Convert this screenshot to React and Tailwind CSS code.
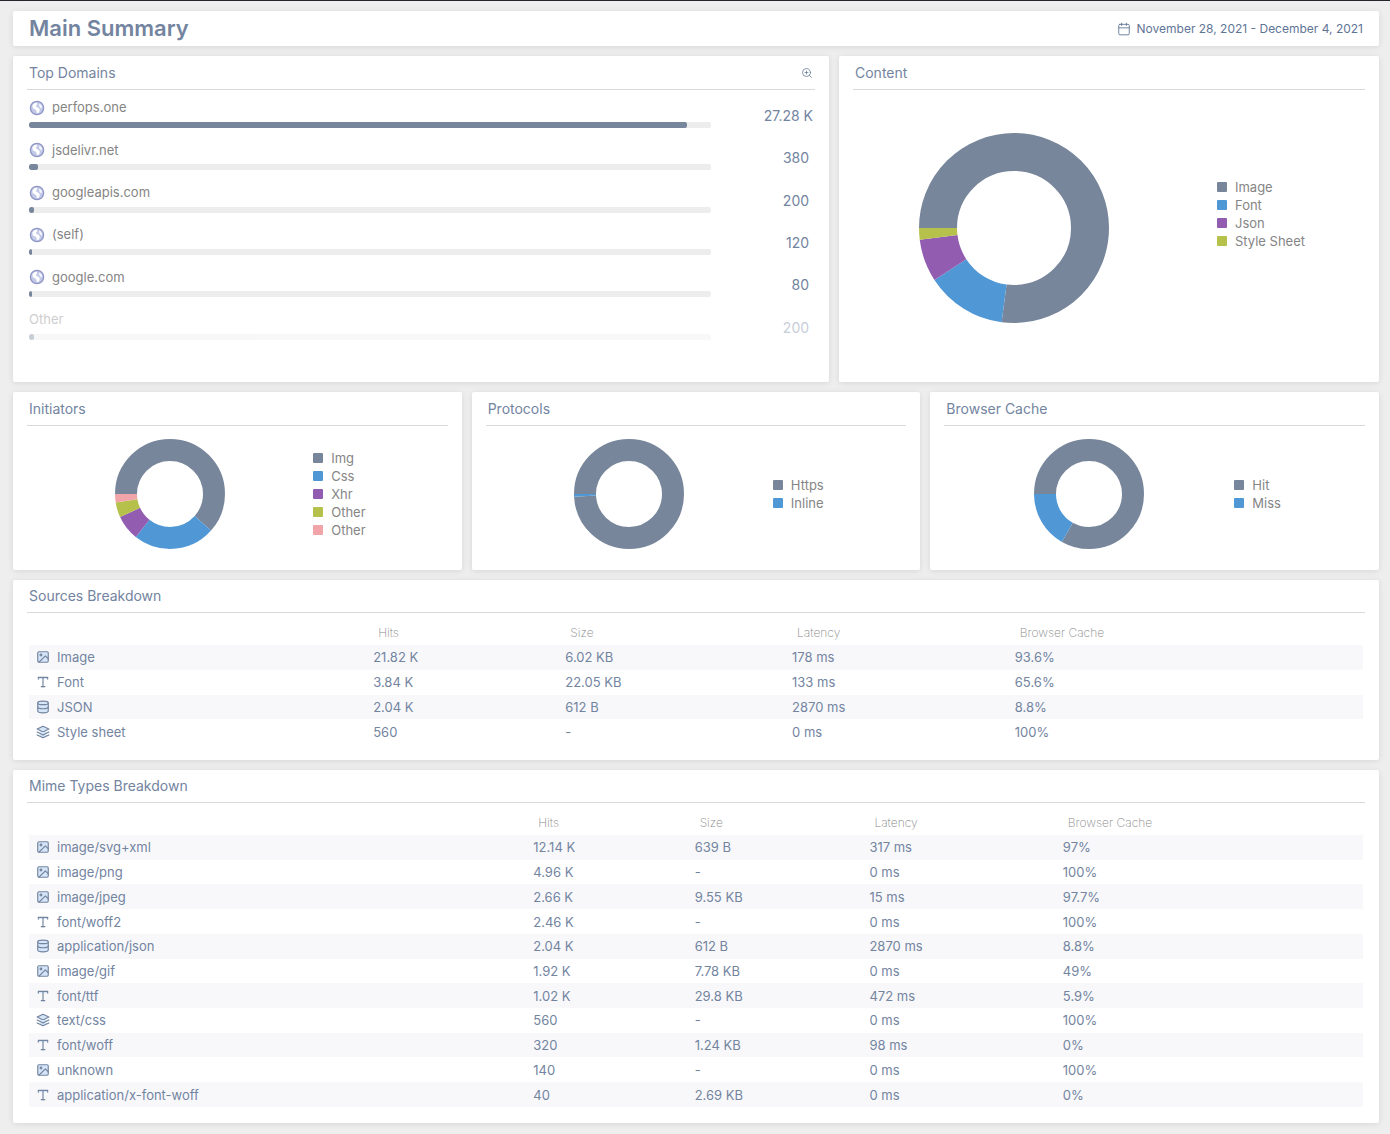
import { FiCalendar, FiZoomIn, FiImage, FiType, FiLayers } from "react-icons/fi";

const COLORS = ["#77869b", "#5097d6", "#925cb1", "#b5c14a", "#f1a5a8"];

const domains = [
  { name: "perfops.one", value: "27.28", unit: "K", percent: 96.5 },
  { name: "jsdelivr.net", value: "380", unit: "", percent: 1.3 },
  { name: "googleapis.com", value: "200", unit: "", percent: 0.7 },
  { name: "(self)", value: "120", unit: "", percent: 0.4 },
  { name: "google.com", value: "80", unit: "", percent: 0.4 },
  { name: "Other", value: "200", unit: "", percent: 0.7, other: true },
];

const content = [
  { label: "Image", value: 77.1 },
  { label: "Font", value: 13.7 },
  { label: "Json", value: 7.2 },
  { label: "Style Sheet", value: 2 },
];

const initiators = [
  { label: "Img", value: 61.6 },
  { label: "Css", value: 24.1 },
  { label: "Xhr", value: 7.4 },
  { label: "Other", value: 4.4 },
  { label: "Other", value: 2.5 },
];

const protocols = [
  { label: "Https", value: 99.2 },
  { label: "Inline", value: 0.8 },
];

const browserCache = [
  { label: "Hit", value: 83.2 },
  { label: "Miss", value: 16.8 },
];

const sources = [
  { type: "image", cells: ["Image", "21.82 K", "6.02 KB", "178 ms", "93.6%"] },
  { type: "font", cells: ["Font", "3.84 K", "22.05 KB", "133 ms", "65.6%"] },
  { type: "json", cells: ["JSON", "2.04 K", "612 B", "2870 ms", "8.8%"] },
  { type: "css", cells: ["Style sheet", "560", "-", "0 ms", "100%"] },
];

const mimeTypes = [
  { type: "image", cells: ["image/svg+xml", "12.14 K", "639 B", "317 ms", "97%"] },
  { type: "image", cells: ["image/png", "4.96 K", "-", "0 ms", "100%"] },
  { type: "image", cells: ["image/jpeg", "2.66 K", "9.55 KB", "15 ms", "97.7%"] },
  { type: "font", cells: ["font/woff2", "2.46 K", "-", "0 ms", "100%"] },
  { type: "json", cells: ["application/json", "2.04 K", "612 B", "2870 ms", "8.8%"] },
  { type: "image", cells: ["image/gif", "1.92 K", "7.78 KB", "0 ms", "49%"] },
  { type: "font", cells: ["font/ttf", "1.02 K", "29.8 KB", "472 ms", "5.9%"] },
  { type: "css", cells: ["text/css", "560", "-", "0 ms", "100%"] },
  { type: "font", cells: ["font/woff", "320", "1.24 KB", "98 ms", "0%"] },
  { type: "image", cells: ["unknown", "140", "-", "0 ms", "100%"] },
  { type: "font", cells: ["application/x-font-woff", "40", "2.69 KB", "0 ms", "0%"] },
];

// The body is painted first so that its fill doesn't hide the rings
const Database = ({ className }) => (
  <svg
    viewBox="0 0 24 24"
    className={className}
    stroke="currentColor"
    strokeWidth="2"
    strokeLinecap="round"
    strokeLinejoin="round"
    aria-hidden="true"
  >
    <path d="M3 5v14c0 1.66 4 3 9 3s9-1.34 9-3V5" />
    <ellipse cx="12" cy="5" rx="9" ry="3" />
    <path d="M21 12c0 1.66-4 3-9 3s-9-1.34-9-3" fill="none" />
  </svg>
);

const typeIcons = {
  image: FiImage,
  font: FiType,
  json: Database,
  css: FiLayers,
};

const Globe = () => (
  <svg viewBox="0 0 16 16" className="size-4 shrink-0" aria-hidden="true">
    <circle cx="8" cy="8" r="6.6" fill="#c3cae8" stroke="#8f96c6" strokeWidth="1.3" />
    <path d="M3.4 5.2 5.6 3l2.2-.3.5 1.5-1.3 1.2.5 1.6 1.9.8 1.4 1.6-.4 2-1.3 1.9-1.4-.8-.4-2.2-1.9-1.4-1.6-.6z" fill="#fff" />
    <path d="M10 3.4 12 4.6l1.2 2.2-.6 1.6-1.6-.8-.8-1.6z" fill="#f3f5fc" />
  </svg>
);

const Card = ({ title, action, titleHeight = "h-[34px]", className = "", children }) => (
  <section className={`rounded-xs bg-white px-[14px] shadow-[0_1px_6px_rgba(0,0,0,0.1)] ${className}`}>
    <div className={`flex items-center justify-between border-b border-[#d8dadd] px-[2px] ${titleHeight}`}>
      <h2 className="text-sm text-[#73849f]">{title}</h2>
      {action}
    </div>
    {children}
  </section>
);

const Donut = ({ data, label, className }) => {
  let start = 0;
  return (
    <svg viewBox="0 0 100 100" className={className} role="img" aria-label={label}>
      {data.map((item, index) => {
        const offset = start;
        start += item.value;
        return (
          <circle
            key={index}
            cx="50"
            cy="50"
            r="40"
            fill="none"
            stroke={COLORS[index]}
            strokeWidth="20"
            pathLength="100"
            strokeDasharray={`${item.value} ${100 - item.value}`}
            strokeDashoffset={-offset}
            transform="rotate(180 50 50)"
          />
        );
      })}
    </svg>
  );
};

const Legend = ({ data, className = "" }) => (
  <ul className={`-mr-[6px] text-[13px] leading-[18px] text-[#858585] ${className}`}>
    {data.map((item, index) => (
      <li key={index} className="flex items-center gap-2">
        <span className="size-[10px] rounded-[1px]" style={{ backgroundColor: COLORS[index] }} />
        {item.label}
      </li>
    ))}
  </ul>
);

const SmallChart = ({ title, data }) => (
  <Card title={title}>
    <div className="flex h-36 items-center justify-evenly pb-2">
      <Donut data={data} label={title} className="size-[110px]" />
      <Legend data={data} />
    </div>
  </Card>
);

const BreakdownTable = ({ title, rows, columns, tableClass }) => (
  <Card title={title} titleHeight="h-[33px]">
    <div className="px-[2px] pt-2 pb-4">
      <table className={`w-full table-fixed text-left text-[13px] leading-5 text-[#73849f] ${tableClass}`}>
        <colgroup>
          {columns.map((column, index) => (
            <col key={index} className={column} />
          ))}
        </colgroup>
        <thead>
          <tr className="h-6 text-xs text-[#888]">
            <td />
            {["Hits", "Size", "Latency", "Browser Cache"].map((head) => (
              <th key={head} scope="col" className="px-[5px] font-extralight">
                {head}
              </th>
            ))}
          </tr>
        </thead>
        <tbody>
          {rows.map(({ type, cells }) => {
            const Icon = typeIcons[type];
            return (
              <tr key={cells[0]} className="odd:bg-[#f8f8fb]">
                {cells.map((cell, index) => (
                  <td key={index}>
                    {index === 0 ? (
                      <span className="flex items-center gap-[7px] pl-[7px]">
                        <Icon className="size-[14px] fill-[#d6e6f8]" />
                        {cell}
                      </span>
                    ) : (
                      cell
                    )}
                  </td>
                ))}
              </tr>
            );
          })}
        </tbody>
      </table>
    </div>
  </Card>
);

export default function App() {
  return (
    <main className="flex min-h-screen flex-col gap-[10px] border-t border-[#25252b] bg-[#eeeeee] pt-[10px] pr-[11px] pb-[11px] pl-[13px] font-['Inter',sans-serif]">
      <header className="flex h-[35px] items-center justify-between rounded-xs bg-white px-4 text-[#73849f] shadow-[0_1px_6px_rgba(0,0,0,0.1)]">
        <h1 className="text-[22px] font-semibold">Main Summary</h1>
        <button className="flex items-center gap-[6px] text-xs text-[#5f7596]">
          <FiCalendar className="size-[14px] stroke-[1.5]" />
          November 28, 2021 - December 4, 2021
        </button>
      </header>

      <div className="grid grid-cols-[68fr_45fr] gap-[10px]">
        <Card
          title="Top Domains"
          className="pb-[37px]"
          action={
            <button aria-label="Show all domains" className="text-[#5f7596]">
              <FiZoomIn className="size-3 stroke-[1.5]" />
            </button>
          }
        >
          <ul className="grid h-[255px] grid-rows-6 px-[2px] pt-px">
            {domains.map((domain) => (
              <li key={domain.name} className={`flex items-center ${domain.other ? "opacity-40" : ""}`}>
                <div className="flex-1">
                  <div className="flex h-6 items-center gap-[7px] text-[13px] text-[#858585]">
                    {!domain.other && <Globe />}
                    {domain.name}
                  </div>
                  <div className="mt-[2px] h-[6px] overflow-hidden rounded-xs bg-[#ededed]">
                    <div className="h-full rounded-xs bg-[#77869b]" style={{ width: `${domain.percent}%` }} />
                  </div>
                </div>
                <div className="w-[102px] pt-2 text-right text-sm text-[#73849f]">
                  {domain.value}&nbsp;{domain.unit}
                </div>
              </li>
            ))}
          </ul>
        </Card>

        <Card title="Content">
          <div className="flex h-[276px] items-center justify-evenly">
            <Donut data={content} label="Content" className="mr-[42px] size-[190px]" />
            <Legend data={content} className="pb-7" />
          </div>
        </Card>
      </div>

      <div className="grid grid-cols-3 gap-[10px]">
        <SmallChart title="Initiators" data={initiators} />
        <SmallChart title="Protocols" data={protocols} />
        <SmallChart title="Browser Cache" data={browserCache} />
      </div>

      <BreakdownTable
        title="Sources Breakdown"
        rows={sources}
        columns={["w-[25.8%]", "w-[14.4%]", "w-[17%]", "w-[16.7%]", "w-[26.1%]"]}
        tableClass="h-[123px]"
      />
      <BreakdownTable
        title="Mime Types Breakdown"
        rows={mimeTypes}
        columns={["w-[37.8%]", "w-[12.1%]", "w-[13.1%]", "w-[14.5%]", "w-[22.5%]"]}
        tableClass="h-[296px]"
      />
    </main>
  );
}
